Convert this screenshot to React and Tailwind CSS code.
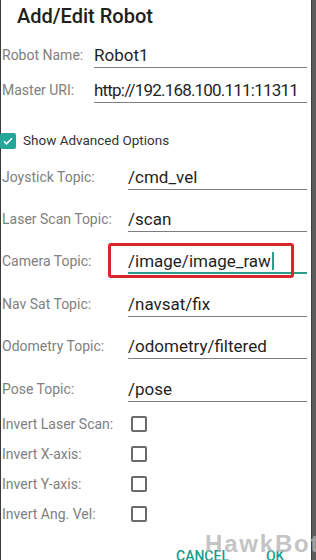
import React from "react";

const font = { fontFamily: "Roboto, 'Noto Sans', sans-serif" };

function Field({ label, value, labelW, active, highlight, top, tight }) {
  return (
    <div className={`flex items-end ${top}`}>
      <div className="text-[14px] text-[#808080] leading-none pb-[6px]" style={{ width: labelW }}>{label}</div>
      <div className={`flex-1 h-[28px] flex items-center pt-[6px] pb-[2px] border-b ${active ? "border-[#2a9d8f] border-b-2" : "border-[#7e7e7e]"} relative`}>
        <span className={`text-[17px] text-[#1f1f1f] leading-none whitespace-nowrap ${tight ? "tracking-[-0.8px]" : ""}`}>{value}</span>
        {active && <span className="w-[2px] h-[18px] bg-[#2a9d8f] ml-[1px]"></span>}
        {highlight && (
          <div className="absolute left-[-20px] top-[-3px] w-[186px] h-[35px] border-[3px] border-[#d9262e] rounded-[3px]"></div>
        )}
      </div>
    </div>
  );
}

function Check({ label, top }) {
  return (
    <div className={`flex items-center h-[16px] ${top}`}>
      <div className="w-[129px] text-[14px] text-[#808080] leading-none">{label}</div>
      <div className="w-[16px] h-[16px] border-2 border-[#6a6a6a] rounded-[2px]"></div>
    </div>
  );
}

export default function App() {
  return (
    <div className="w-[316px] h-[560px] flex bg-white overflow-hidden relative" style={font}>
      <div className="w-[1px] shrink-0 bg-[#3a3a3a]"></div>
      <div className="flex-1 pl-[1px] pr-[4px]">
        <div className="pl-[15px] pt-[4px] h-[40px] text-[20px] font-medium text-[#202020] leading-[25px]">Add/Edit Robot</div>
        <Field label="Robot Name:" value="Robot1" labelW={92} top="" />
        <Field label="Master URI:" value="http://192.168.100.111:11311" labelW={92} top="mt-[7px]" tight />
        <div className="flex items-center h-[16px] mt-[30px] -ml-[2px]">
          <div className="w-[16px] h-[16px] bg-[#26a69a] rounded-[2px] flex items-center justify-center">
            <svg width="12" height="12" viewBox="0 0 24 24" fill="none" stroke="white" strokeWidth="3.2"><path d="M4 12.5l5 5L20 6.5" /></svg>
          </div>
          <span className="ml-[7px] text-[13.5px] text-[#333] leading-none">Show Advanced Options</span>
        </div>
        <Field label="Joystick Topic:" value="/cmd_vel" labelW={126} top="mt-[13px]" />
        <Field label="Laser Scan Topic:" value="/scan" labelW={126} top="mt-[14px]" />
        <Field label="Camera Topic:" value="/image/image_raw" labelW={126} active highlight top="mt-[14px]" />
        <Field label="Nav Sat Topic:" value="/navsat/fix" labelW={126} top="mt-[15px]" />
        <Field label="Odometry Topic:" value="/odometry/filtered" labelW={126} top="mt-[14px]" />
        <Field label="Pose Topic:" value="/pose" labelW={126} top="mt-[15px]" />
        <Check label="Invert Laser Scan:" top="mt-[14px]" />
        <Check label="Invert X-axis:" top="mt-[14px]" />
        <Check label="Invert Y-axis:" top="mt-[14px]" />
        <Check label="Invert Ang. Vel:" top="mt-[14px]" />
        <div className="flex mt-[27px] pl-[174px] text-[14px] font-medium text-[#1a9c8c] leading-none">
          <span>CANCEL</span>
          <span className="ml-[37px]">OK</span>
        </div>
      </div>
      <div className="w-[5px] shrink-0 bg-[#5c5c5c] border-l border-[#3e3e3e]"></div>
      <div className="absolute left-[205px] top-[532px] text-[24px] font-black text-[#b4b4b4]/80 leading-none tracking-[1.8px]" style={{ fontFamily: "'Liberation Sans', Arial, sans-serif" }}>HawkBot</div>
    </div>
  );
}
